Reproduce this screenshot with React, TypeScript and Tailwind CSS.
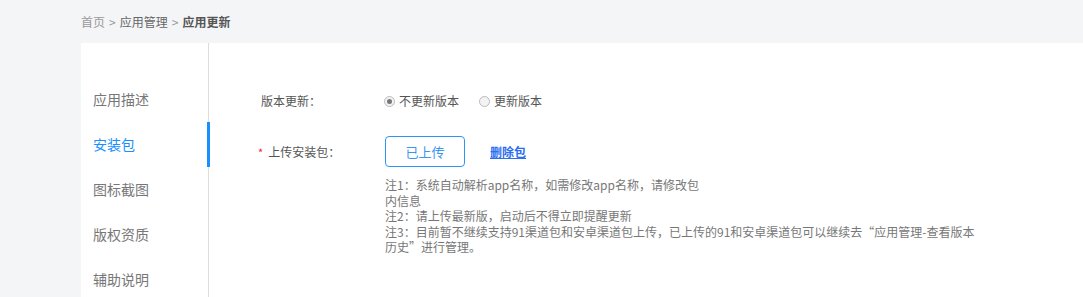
const FONT = '"Microsoft YaHei", "Noto Sans CJK SC", "Liberation Sans", sans-serif';

const navItems = ["应用描述", "安装包", "图标截图", "版权资质", "辅助说明"];

export default function App() {
  return (
    <div className="h-[297px] w-[1083px] overflow-hidden bg-[#f4f5f7]" style={{ fontFamily: FONT }}>
      {/* breadcrumb */}
      <div className="flex h-[43px] items-center pl-[81px] text-[12px]">
        <span className="text-[#999]">首页</span>
        <span className="mx-[4px] text-[#999]">&gt;</span>
        <span className="text-[#666]">应用管理</span>
        <span className="mx-[4px] text-[#999]">&gt;</span>
        <span className="font-bold text-[#555]">应用更新</span>
      </div>

      <div className="ml-[81px] flex h-[254px] bg-white">
        {/* sidebar */}
        <div className="w-[128px] border-r border-[#dcdcdc] pt-[34px]">
          {navItems.map((item, i) => (
            <div
              key={item}
              className={
                "relative flex h-[45px] items-center pl-[12px] text-[14px] " +
                (i === 1 ? "text-[#1890ff]" : "text-[#777]")
              }
            >
              {item}
              {i === 1 && <div className="absolute right-[-2px] top-0 h-[45px] w-[3px] bg-[#1890ff]" />}
            </div>
          ))}
        </div>

        {/* form */}
        <div className="flex-1 pl-[49px] pt-[49px] text-[12px] text-[#555]">
          <div className="flex h-[18px] items-center">
            <div className="w-[126px] pl-[3px]">版本更新：</div>
            <label className="flex items-center">
              <span className="flex h-[11px] w-[11px] items-center justify-center rounded-full border border-[#bbb] bg-[#f3f3f3]">
                <span className="h-[5px] w-[5px] rounded-full bg-[#777]" />
              </span>
              <span className="ml-[4px]">不更新版本</span>
            </label>
            <label className="ml-[20px] flex items-center">
              <span className="h-[11px] w-[11px] rounded-full border border-[#bbb] bg-[#f3f3f3]" />
              <span className="ml-[4px]">更新版本</span>
            </label>
          </div>

          <div className="mt-[26px] flex items-center">
            <div className="w-[127px]">
              <span className="mr-[5px] text-[11px] text-[#f5222d]">*</span>
              上传安装包：
            </div>
            <button className="h-[31px] w-[80px] rounded-[4px] border border-[#2f95f5] text-[13px] text-[#3a96f0]">
              已上传
            </button>
            <a className="ml-[25px] text-[12px] font-bold text-[#2b6ef0] underline">删除包</a>
          </div>

          <div className="ml-[127px] mt-[10px] text-[12px] leading-[15.5px] text-[#777]">
            <div>注1：系统自动解析app名称，如需修改app名称，请修改包</div>
            <div>内信息</div>
            <div>注2：请上传最新版，启动后不得立即提醒更新</div>
            <div>注3：目前暂不继续支持91渠道包和安卓渠道包上传，已上传的91和安卓渠道包可以继续去“应用管理-查看版本</div>
            <div>历史”进行管理。</div>
          </div>
        </div>
      </div>
    </div>
  );
}
